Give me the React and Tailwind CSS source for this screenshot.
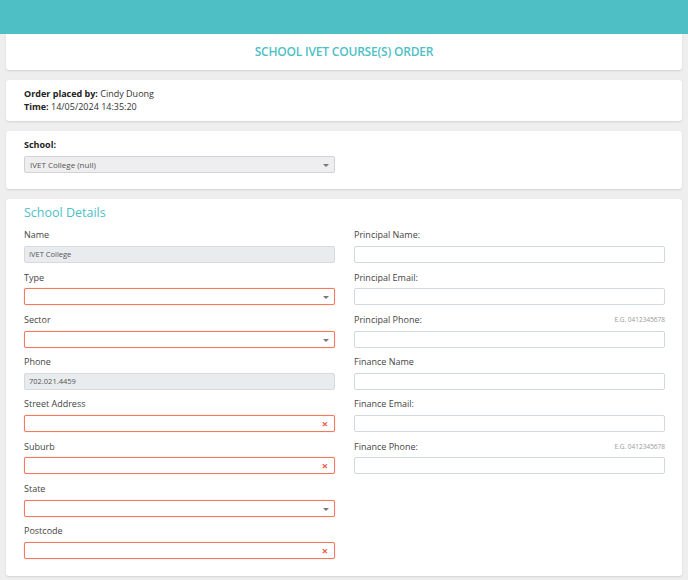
import React from 'react';

const leftFields = [
  { label: 'Name', kind: 'disabled', value: 'IVET College' },
  { label: 'Type', kind: 'select' },
  { label: 'Sector', kind: 'select' },
  { label: 'Phone', kind: 'disabled', value: '702.021.4459' },
  { label: 'Street Address', kind: 'error' },
  { label: 'Suburb', kind: 'error' },
  { label: 'State', kind: 'select' },
  { label: 'Postcode', kind: 'error' },
];

const rightFields = [
  { label: 'Principal Name:' },
  { label: 'Principal Email:' },
  { label: 'Principal Phone:', hint: 'E.G. 0412345678' },
  { label: 'Finance Name' },
  { label: 'Finance Email:' },
  { label: 'Finance Phone:', hint: 'E.G. 0412345678' },
];

const Caret = () => (
  <span className="absolute right-[5px] top-[7px] w-0 h-0 border-l-[3px] border-r-[3px] border-t-[3px] border-l-transparent border-r-transparent border-t-[#777]" />
);

const Cross = () => (
  <span className="absolute right-[6px] top-0 h-full flex items-center text-[11px] font-bold text-[#ef5a45] leading-none">
    ×
  </span>
);

const Field = ({ field }) => {
  let box = 'border-[#d3d8dd] bg-white';
  if (field.kind === 'disabled') box = 'border-[#d6dadf] bg-[#e9ecef]';
  if (field.kind === 'select' || field.kind === 'error')
    box = 'border-[#f6785f] bg-white shadow-[0_0_1px_rgba(244,115,90,0.8)]';

  return (
    <div className="mb-[7.3px]">
      <div className="h-[14px] flex items-center justify-between text-[9px] text-[#444]">
        <span>{field.label}</span>
        {field.hint && <span className="text-[6.5px] text-[#999]">{field.hint}</span>}
      </div>
      <div className={`relative mt-[4px] h-[17px] border rounded-[2px] ${box}`}>
        {field.value && (
          <span className="absolute left-[4px] top-0 h-full flex items-center text-[7.5px] text-[#555]">
            {field.value}
          </span>
        )}
        {field.kind === 'select' && <Caret />}
        {field.kind === 'error' && <Cross />}
      </div>
    </div>
  );
};

const Card = ({ className = '', children }) => (
  <div className={`bg-white rounded-[3px] shadow-[0_1px_2px_rgba(0,0,0,0.12)] ${className}`}>{children}</div>
);

const App = () => {
  return (
    <div
      className="min-h-screen bg-[#eeeeee] pb-[3px]"
      style={{ fontFamily: '"Open Sans", "Noto Sans", sans-serif' }}
    >
      {/* Top bar */}
      <div className="h-[34px] bg-[#4dbfc5]" />

      <div className="px-[6px] flex flex-col gap-[10px]">
        {/* Title */}
        <Card className="h-[36px] flex items-center justify-center rounded-t-none">
          <h1 className="text-[12px] font-semibold text-[#4dbfc5] tracking-[-0.2px]">
            SCHOOL IVET COURSE(S) ORDER
          </h1>
        </Card>

        {/* Order info */}
        <Card className="h-[41px] px-[18px] pt-[7px] text-[9px] text-[#333] leading-[13px]">
          <div>
            <span className="font-bold text-[#222]">Order placed by:</span> Cindy Duong
          </div>
          <div>
            <span className="font-bold text-[#222]">Time:</span> 14/05/2024 14:35:20
          </div>
        </Card>

        {/* School select */}
        <Card className="h-[58px] px-[18px] pt-[7px]">
          <div className="text-[9px] font-bold text-[#222] leading-[13px]">School:</div>
          <div className="relative mt-[5px] w-[311px] h-[17px] border border-[#cfd3d7] rounded-[2px] bg-[#eeeeee]">
            <span className="absolute left-[5px] top-0 h-full flex items-center text-[8px] text-[#555]">
              IVET College (null)
            </span>
            <Caret />
          </div>
        </Card>

        {/* School details */}
        <Card className="px-[18px] pt-[6px] pb-[10px]">
          <h2 className="h-[16px] flex items-center text-[12.5px] text-[#4dbfc5] mb-[7px]">School Details</h2>
          <div className="grid grid-cols-[311px_311px] gap-x-[19px]">
            <div>
              {leftFields.map((f) => (
                <Field key={f.label} field={f} />
              ))}
            </div>
            <div>
              {rightFields.map((f) => (
                <Field key={f.label} field={f} />
              ))}
            </div>
          </div>
        </Card>
      </div>
    </div>
  );
};

export default App;
